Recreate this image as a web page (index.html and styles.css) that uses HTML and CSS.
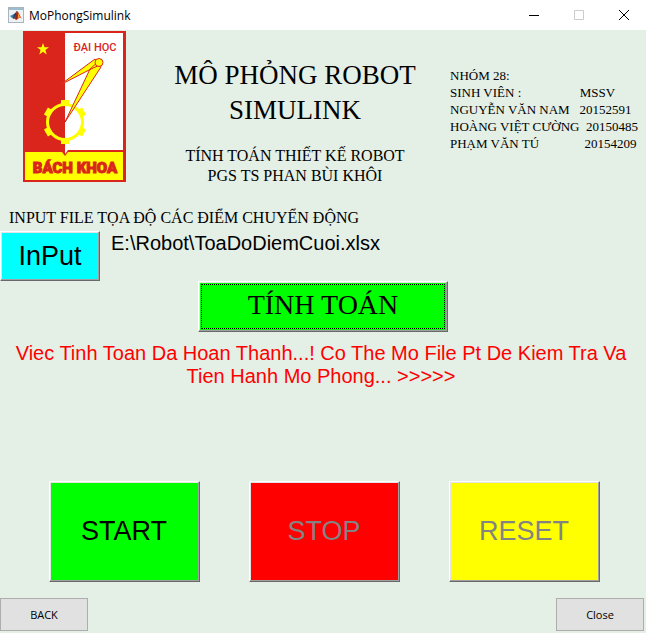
FILE: index.html
```html
<!DOCTYPE html>
<html lang="vi">
<head>
<meta charset="utf-8">
<title>MoPhongSimulink</title>
<link rel="stylesheet" href="styles.css">
</head>
<body>
<div class="titlebar">
  <svg class="app-icon" viewBox="0 0 16 16" aria-hidden="true">
    <rect x=".5" y=".5" width="15" height="15" fill="#eef2f5" stroke="#a9b4bd"/>
    <path d="M1 1h14v2H1z" fill="#9bbdd2"/>
    <path d="M2 9l4-2 2 2-2 3-2-1z" fill="#3c7eae"/>
    <path d="M6 7c2-1 2-3 3-3L8 10l-2 2-1-1z" fill="#253f6b"/>
    <path d="M9 4c2 1 3 5 5 8-2-2-3-1-4 0l-2 1-2-2c2-1 2-4 3-7z" fill="#d6491c"/>
    <path d="M9 4c1 2 1 5 0 8l-1 1-1-2c1-2 1-4 2-7z" fill="#8e2413"/>
    <path d="M10 6l2 4-2 1z" fill="#f39a32"/>
  </svg>
  <span class="caption">MoPhongSimulink</span>
  <div class="window-buttons">
    <button class="window-button" type="button" aria-label="Minimize"><svg viewBox="0 0 10 10"><path d="M0 5.500h10"/></svg></button>
    <button class="window-button" type="button" aria-label="Maximize" disabled><svg viewBox="0 0 10 10"><path d="M.5.5h9v9h-9z"/></svg></button>
    <button class="window-button" type="button" aria-label="Close window"><svg viewBox="0 0 10 10"><path d="M0 0l10 10M10 0L0 10"/></svg></button>
  </div>
</div>
<main>
  <header class="intro">
    <svg class="logo" viewBox="0 0 103 151" role="img" aria-label="Đại học Bách Khoa">
      <path d="M0 0h103v151H0z" fill="#da251d"/>
      <path d="M42 2h58v117H45l-3 4z" fill="#fff"/>
      <path d="M2 121h37l3 4 3-4h55v28H2z" fill="#ff0"/>
      <path d="M20 12l1.500 4.300h4.500l-3.600 2.700 1.300 4.400-3.700-2.600-3.700 2.600 1.300-4.400L14 16.300h4.500z" fill="#ff0"/>
      <circle cx="42" cy="91" r="17.500" fill="none" stroke="#ff0" stroke-width="3"/>
      <g fill="#ff0">
        <path id="tooth" d="M38 69h8v4l3 2H35l3-2z"/>
        <use href="#tooth" transform="rotate(60 42 91)"/>
        <use href="#tooth" transform="rotate(120 42 91)"/>
        <use href="#tooth" transform="rotate(180 42 91)"/>
        <use href="#tooth" transform="rotate(240 42 91)"/>
        <use href="#tooth" transform="rotate(300 42 91)"/>
      </g>
      <path d="M37 54L72 28l5 6-9 4zM42 91l25-53 8-7 3 5z" fill="#ff0" stroke="#da251d"/>
      <circle cx="76" cy="31.500" r="4" fill="#ff0" stroke="#da251d"/>
      <text class="logo-top" x="72" y="20">ĐẠI HỌC</text>
      <text class="logo-name" x="52" y="142">BÁCH KHOA</text>
    </svg>
    <div class="headings">
      <h1>MÔ PHỎNG ROBOT SIMULINK</h1>
      <p class="subtitle">TÍNH TOÁN THIẾT KẾ ROBOT<br>PGS TS PHAN BÙI KHÔI</p>
    </div>
    <p class="group">NHÓM 28:
SINH VIÊN :                  MSSV
NGUYỄN VĂN NAM   20152591
HOÀNG VIỆT CƯỜNG  20150485
PHẠM VĂN TÚ              20154209</p>
  </header>
  <section class="source">
    <h2 id="source-title">INPUT FILE TỌA ĐỘ CÁC ĐIỂM CHUYỂN ĐỘNG</h2>
    <div class="source-row">
      <button class="raised input-button" type="button" aria-describedby="source-title">InPut</button>
      <output class="path">E:\Robot\ToaDoDiemCuoi.xlsx</output>
    </div>
  </section>
  <button class="raised calculate" type="button"><span class="focus-ring">TÍNH TOÁN</span></button>
  <p class="message" role="status">Viec Tinh Toan Da Hoan Thanh...! Co The Mo File Pt De Kiem Tra Va Tien Hanh Mo Phong... &gt;&gt;&gt;&gt;&gt;</p>
  <div class="actions">
    <button class="raised start" type="button">START</button>
    <button class="raised stop" type="button" disabled>STOP</button>
    <button class="raised reset" type="button" disabled>RESET</button>
  </div>
  <footer>
    <button class="plain" type="button">BACK</button>
    <button class="plain" type="button">Close</button>
  </footer>
</main>
</body>
</html>
```
FILE: styles.css
```css
* {
  box-sizing: border-box;
}

body {
  display: flex;
  flex-direction: column;
  min-height: 100vh;
  margin: 0;
  background: #e4efe6;
  color: #000;
  font-family: "Liberation Serif", serif;
}

h1, h2, p {
  margin: 0;
  font-weight: normal;
}

button {
  padding: 0;
  color: #000;
}

.titlebar {
  display: flex;
  align-items: center;
  height: 30px;
  padding-left: 8px;
  background: #fff;
  font: 12px "Open Sans", sans-serif;
}

.app-icon {
  width: 16px;
  height: 16px;
  margin-right: 5px;
}

.window-buttons {
  display: flex;
  margin-left: auto;
}

.window-button {
  display: grid;
  place-items: center;
  width: 45px;
  height: 30px;
  border: 0;
  background: none;
}

.window-button svg {
  width: 10px;
  height: 10px;
  overflow: visible;
  fill: none;
  stroke: #000;
}

.window-button:disabled svg {
  stroke: #ccc;
}

main {
  display: flex;
  flex: 1;
  flex-direction: column;
}

.intro {
  display: grid;
  grid-template-columns: 103px 1fr 196px;
  padding: 1px 0 0 23px;
}

.logo {
  width: 103px;
  height: 151px;
}

.logo text {
  fill: #da251d;
  text-anchor: middle;
}

.logo-top {
  font: 500 11px Roboto, sans-serif;
}

.logo-name {
  font: 900 15px Roboto, sans-serif;
  stroke: #da251d;
}

.headings {
  padding: 27px 32px 0 46px;
  text-align: center;
}

h1 {
  font-size: 27px;
  line-height: 35px;
}

.subtitle {
  margin: 18px -20px 0;
  font-size: 16px;
  line-height: 20px;
}

.group {
  padding-top: 36px;
  font-size: 13px;
  line-height: 17px;
  white-space: pre;
}

.source {
  margin-top: 22px;
}

h2 {
  padding-left: 9px;
  font-size: 16px;
  line-height: 20px;
}

.source-row {
  display: flex;
  gap: 11px;
  margin-top: 3px;
}

.raised {
  border: 1px solid;
  border-color: #fff #696969 #696969 #fff;
  box-shadow: inset -1px -1px #a0a0a0, inset 1px 1px #e3e3e3;
  font: 27px "Liberation Sans", sans-serif;
}

.raised:disabled {
  color: #838383;
}

.input-button {
  width: 100px;
  height: 50px;
  background: #0ff;
}

.path {
  font: 20px/24px "Liberation Sans", sans-serif;
}

.calculate {
  align-self: center;
  width: 250px;
  height: 51px;
  background: #0f0;
  font-family: "Liberation Serif", serif;
  font-size: 28px;
}

.focus-ring {
  display: block;
  height: 45px;
  margin: 0 2px;
  border: 1px dotted #000;
  line-height: 40px;
}

.message {
  padding: 10px 14px 0 10px;
  color: #f00;
  font: 20px/23px "Liberation Sans", sans-serif;
  text-align: center;
}

.actions {
  display: flex;
  justify-content: center;
  gap: 49px;
  margin-top: auto;
  padding-left: 2px;
}

.actions .raised {
  width: 151px;
  height: 101px;
}

.start {
  background: #0f0;
}

.stop {
  background: #f00;
}

.reset {
  background: #ff0;
}

footer {
  display: flex;
  justify-content: space-between;
  padding: 16px 2px 2px 0;
}

.plain {
  width: 88px;
  height: 33px;
  border: 1px solid #adadad;
  background: #e1e1e1;
  font: 11px "Open Sans", sans-serif;
}
```
